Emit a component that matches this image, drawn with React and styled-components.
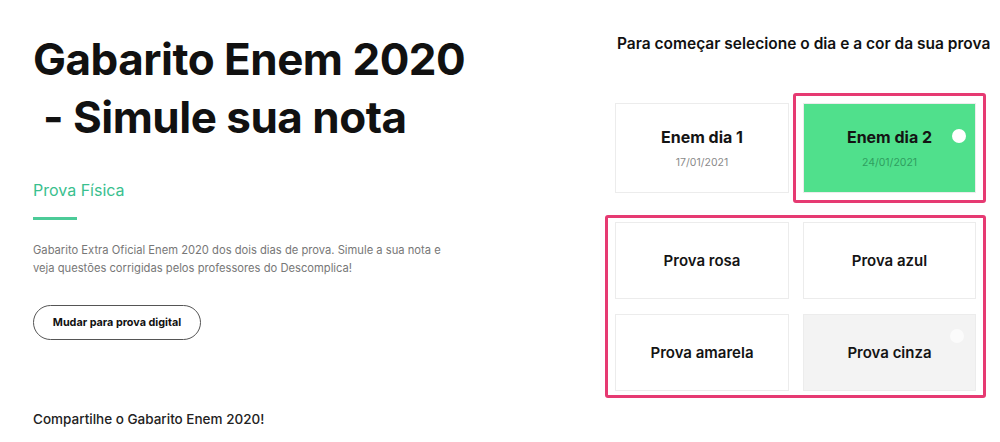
import React from "react"
import styled, { createGlobalStyle } from "styled-components"

const GlobalStyle = createGlobalStyle`
  body {
    margin: 0;
    background: #fff;
    font-family: "Inter", "Noto Sans", sans-serif;
    color: #1a1a1a;
  }
`

const Page = styled.main`
  display: flex;
  width: 1000px;
  height: 442px;
  overflow: hidden;
`

const Intro = styled.section`
  width: 605px;
  flex-shrink: 0;
  padding: 30px 0 0 33px;
  box-sizing: border-box;
  display: flex;
  flex-direction: column;
`

const Title = styled.h1`
  margin: 0;
  font-size: 44px;
  line-height: 58px;
  font-weight: 700;
  letter-spacing: -0.5px;
  color: #111;
`

const Kind = styled.h2`
  margin: 35px 0 0;
  font-size: 16px;
  line-height: 19px;
  font-weight: 400;
  color: #39c08e;
`

const Underline = styled.span`
  display: block;
  width: 44px;
  height: 3px;
  margin-top: 17px;
  background: #4ccb98;
`

const Text = styled.p`
  margin: 21px 0 0;
  max-width: 420px;
  font-size: 11.2px;
  line-height: 18px;
  color: #777;
`

const SwitchButton = styled.button`
  margin-top: 28px;
  width: 168px;
  height: 35px;
  border: 1px solid #555;
  border-radius: 18px;
  background: #fff;
  font-family: inherit;
  font-size: 10.8px;
  font-weight: 700;
  color: #111;
  align-self: flex-start;
`

const Share = styled.p`
  margin: 71px 0 0;
  font-size: 13.5px;
  line-height: 16px;
  font-weight: 500;
  color: #222;
`

const Picker = styled.section`
  display: flex;
  flex-direction: column;
  padding-top: 34px;
`

const Heading = styled.h3`
  margin: 0 0 40px 12px;
  font-size: 15.5px;
  line-height: 19px;
  font-weight: 600;
  color: #111;
  white-space: nowrap;
`

const DayRow = styled.div`
  display: flex;
  align-items: center;
  padding-left: 10px;
  gap: 4px;
`

const Highlight = styled.div`
  align-self: flex-start;
  margin-top: ${(p) => p.$mt || 0}px;
  border: 3px solid #e63a72;
  border-radius: 3px;
  padding: ${(p) => p.$pad};
`

const Card = styled.div`
  position: relative;
  box-sizing: border-box;
  width: ${(p) => p.$w || 174}px;
  height: ${(p) => p.$h}px;
  border: 1px solid #ececec;
  background: ${(p) => p.$bg || "#fff"};
  display: flex;
  flex-direction: column;
  align-items: center;
  justify-content: center;
  gap: 9px;
`

const CardTitle = styled.span`
  font-size: 16px;
  font-weight: 700;
  color: #141414;
`

const CardDate = styled.span`
  font-size: 10.5px;
  color: ${(p) => p.$color || "#8a8a8a"};
`

const Dot = styled.span`
  position: absolute;
  top: ${(p) => p.$top}px;
  right: ${(p) => p.$right}px;
  width: 14px;
  height: 14px;
  border-radius: 50%;
  background: ${(p) => p.$color};
`

const ColorGrid = styled.div`
  display: grid;
  grid-template-columns: 174px 173px;
  column-gap: 14px;
  row-gap: 15px;
`

const ColorName = styled.span`
  font-size: 15px;
  font-weight: 600;
  color: #141414;
`

const colors = [
  { name: "Prova rosa" },
  { name: "Prova azul" },
  { name: "Prova amarela" },
  { name: "Prova cinza", bg: "#f3f3f3", dot: true },
]

export default function App() {
  return (
    <>
      <GlobalStyle />
      <Page>
        <Intro>
          <Title>
            Gabarito Enem 2020
            <br />
            &nbsp;- Simule sua nota
          </Title>
          <Kind>Prova Física</Kind>
          <Underline />
          <Text>
            Gabarito Extra Oficial Enem 2020 dos dois dias de prova. Simule a sua nota e
            veja questões corrigidas pelos professores do Descomplica!
          </Text>
          <SwitchButton>Mudar para prova digital</SwitchButton>
          <Share>Compartilhe o Gabarito Enem 2020!</Share>
        </Intro>

        <Picker>
          <Heading>Para começar selecione o dia e a cor da sua prova</Heading>
          <DayRow>
            <Card $h={90}>
              <CardTitle>Enem dia 1</CardTitle>
              <CardDate>17/01/2021</CardDate>
            </Card>
            <Highlight $pad="7px">
              <Card $h={90} $w={173} $bg="#50e08c">
                <CardTitle>Enem dia 2</CardTitle>
                <CardDate $color="#2f9e60">24/01/2021</CardDate>
                <Dot $top={25} $right={9} $color="#fff" />
              </Card>
            </Highlight>
          </DayRow>
          <Highlight $pad="4px 7px" $mt={12}>
            <ColorGrid>
              {colors.map((c, i) => (
                <Card key={c.name} $h={77} $w={i % 2 ? 173 : 174} $bg={c.bg}>
                  <ColorName>{c.name}</ColorName>
                  {c.dot && <Dot $top={14} $right={11} $color="#fbfbfb" />}
                </Card>
              ))}
            </ColorGrid>
          </Highlight>
        </Picker>
      </Page>
    </>
  )
}
